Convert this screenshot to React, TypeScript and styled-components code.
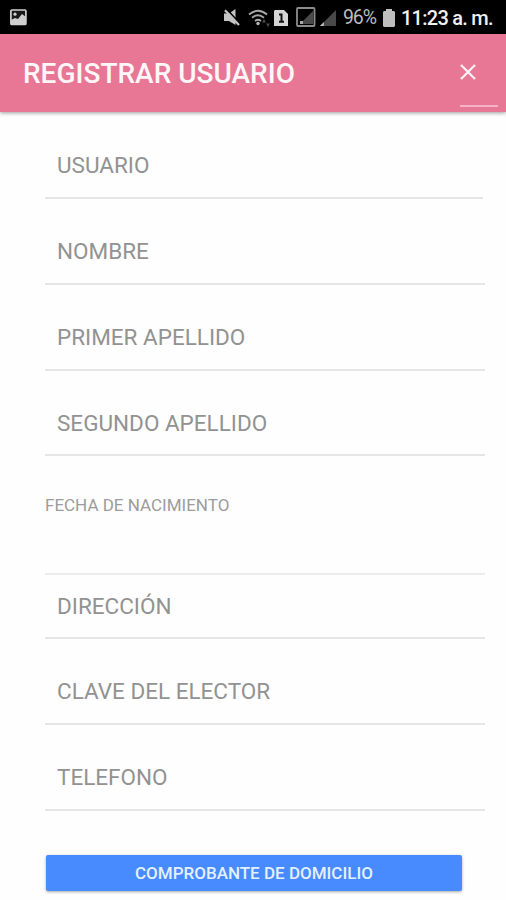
import React from 'react';
import styled, { createGlobalStyle } from 'styled-components';

const GlobalStyle = createGlobalStyle`
  * { box-sizing: border-box; }
  body {
    margin: 0;
    background: #fefefe;
    font-family: Roboto, sans-serif;
  }
`;

const Screen = styled.div`
  display: flex;
  flex-direction: column;
  width: 506px;
  height: 900px;
  overflow: hidden;
  background: #fefefe;
`;

const StatusBar = styled.div`
  display: flex;
  align-items: center;
  flex: none;
  height: 34px;
  padding: 1px 12px 0 9px;
  background: #000;
`;

const StatusIcons = styled.div`
  display: flex;
  align-items: center;
  margin-left: auto;
  margin-right: 6px;
`;

const StatusText = styled.span<{ $width: number; $bold?: boolean }>`
  width: ${({ $width }) => $width}px;
  flex: none;
  color: ${({ $bold }) => ($bold ? '#f0f0f0' : '#bcbcbc')};
  font-size: ${({ $bold }) => ($bold ? 20 : 19.5)}px;
  font-weight: ${({ $bold }) => ($bold ? 500 : 400)};
  letter-spacing: ${({ $bold }) => ($bold ? -0.75 : -1.1)}px;
  line-height: 34px;
  white-space: nowrap;
`;

const BatteryIcon = styled.svg`
  flex: none;
  margin: 0 6px 0 6px;
`;

const Header = styled.header`
  display: flex;
  position: relative;
  z-index: 1;
  flex: none;
  height: 78px;
  padding: 0 8px 0 23px;
  justify-content: space-between;
  background: #e87796;
  box-shadow: 0 1px 4px rgba(0, 0, 0, 0.4);
`;

const Title = styled.h1`
  margin: 0;
  color: #fff6f8;
  font-size: 28px;
  font-weight: 500;
  line-height: 80px;
  white-space: nowrap;
`;

const CloseButton = styled.button`
  display: flex;
  width: 38px;
  height: 73px;
  padding: 30px 0 0;
  border: 0;
  border-bottom: 2px solid #f3b2c5;
  background: none;
`;

const Form = styled.form`
  display: flex;
  flex-direction: column;
  padding: 0 21px 0 45px;
`;

const Field = styled.label<{ $height: number; $bottom?: number; $short?: boolean }>`
  display: flex;
  flex: none;
  align-items: flex-end;
  height: ${({ $height }) => $height}px;
  margin-right: ${({ $short }) => ($short ? 2 : 0)}px;
  padding: 0 12px ${({ $bottom = 19 }) => $bottom}px;
  border-bottom: 2px solid #e6e6e6;
`;

const FieldLabel = styled.span`
  color: #929292;
  font-size: 22.5px;
  line-height: 26px;
  white-space: nowrap;
`;

const DateField = styled.label`
  flex: none;
  height: 119px;
  padding-top: 39px;
  border-bottom: 2px solid #ececec;
  color: #9c9c9c;
  font-size: 17px;
  line-height: 20px;
`;

const SubmitButton = styled.button`
  flex: none;
  width: 416px;
  height: 36px;
  margin: 44px 0 0 1px;
  padding: 0;
  border: 0;
  border-radius: 2px;
  background: #488aff;
  box-shadow: 0 1px 3px rgba(0, 0, 0, 0.35);
  color: #e4f1ff;
  font: 500 17px/36px Roboto, sans-serif;
  white-space: nowrap;
`;

const fieldsBefore = [
  { label: 'USUARIO', height: 87, short: true },
  { label: 'NOMBRE', height: 86 },
  { label: 'PRIMER APELLIDO', height: 86 },
  { label: 'SEGUNDO APELLIDO', height: 85, bottom: 18 },
];

const fieldsAfter = [
  { label: 'DIRECCIÓN', height: 64, bottom: 18 },
  { label: 'CLAVE DEL ELECTOR', height: 86 },
  { label: 'TELEFONO', height: 86 },
];

function PictureIcon() {
  return (
    <svg width="19" height="17" viewBox="0 0 19 17">
      <rect x="1.9" y="1" width="15" height="14.5" rx="1" fill="#191919" stroke="#d0d0d0" strokeWidth="1.7" />
      <path d="M2 14v-3l4-2 3 1 4-5 4 3v7H2z" fill="#cfcfcf" />
      <circle cx="6" cy="5.2" r="1.6" fill="#cfcfcf" />
    </svg>
  );
}

function StatusGlyphs() {
  return (
    <svg width="115" height="24" viewBox="0 0 115 24">
      <path d="M2 7.5h5L13.5 3v16L7 15H2z" fill="#c4c4c4" />
      <path d="M4.5 3L18 17.5" stroke="#000" strokeWidth="1.8" />
      <path d="M3 4.2L17 19" stroke="#c4c4c4" strokeWidth="2.2" />
      <g fill="none" stroke="#a8a8a8" strokeWidth="1.8">
        <path d="M27 8.5q9-7.5 18 0" />
        <path d="M30 11.8q6-5 12 0" />
        <path d="M33 15q3-2.5 6 0" />
      </g>
      <circle cx="36" cy="17.5" r="1.7" fill="#b8b8b8" />
      <path d="M40 16.5l2-3.5 2 3.5zm4 1h4l-2 3.5z" fill="#4c4c4c" />
      <path d="M53 4h9l4 4v12H52V5z" fill="#d5d5d5" />
      <path d="M57 8.5h2.5v7M57 15.8h5" fill="none" stroke="#111" strokeWidth="2" />
      <rect x="75" y="2" width="17.5" height="18" rx="1" fill="none" stroke="#8c8c8c" strokeWidth="1.8" />
      <path d="M78 18L91 5v13z" fill="#4a4a4a" />
      <path d="M78 18v-3h3v3z" fill="#a8a8a8" />
      <path d="M98 20L114 4v16z" fill="#494949" />
      <path d="M98 20l3.8-4v4z" fill="#c0c0c0" />
    </svg>
  );
}

export default function App() {
  return (
    <>
      <GlobalStyle />
      <Screen>
        <StatusBar>
          <PictureIcon />
          <StatusIcons>
            <StatusGlyphs />
          </StatusIcons>
          <StatusText $width={34}>96%</StatusText>
          <BatteryIcon width="12" height="18" viewBox="0 0 12 18">
            <path d="M3 0h6v2h2l1 1v14l-1 1H1l-1-1V3l1-1h2z" fill="#bebebe" />
          </BatteryIcon>
          <StatusText $width={93} $bold>11:23 a. m.</StatusText>
        </StatusBar>
        <Header>
          <Title>REGISTRAR USUARIO</Title>
          <CloseButton type="button" aria-label="Cerrar">
            <svg width="16" height="16" viewBox="0 0 16 16">
              <path d="M1 1l14 14M15 1L1 15" stroke="#fff2f5" strokeWidth="2.3" />
            </svg>
          </CloseButton>
        </Header>
        <Form>
          {fieldsBefore.map((f) => (
            <Field key={f.label} $height={f.height} $bottom={f.bottom} $short={f.short}>
              <FieldLabel>{f.label}</FieldLabel>
            </Field>
          ))}
          <DateField>FECHA DE NACIMIENTO</DateField>
          {fieldsAfter.map((f) => (
            <Field key={f.label} $height={f.height} $bottom={f.bottom}>
              <FieldLabel>{f.label}</FieldLabel>
            </Field>
          ))}
          <SubmitButton type="button">COMPROBANTE DE DOMICILIO</SubmitButton>
        </Form>
      </Screen>
    </>
  );
}
